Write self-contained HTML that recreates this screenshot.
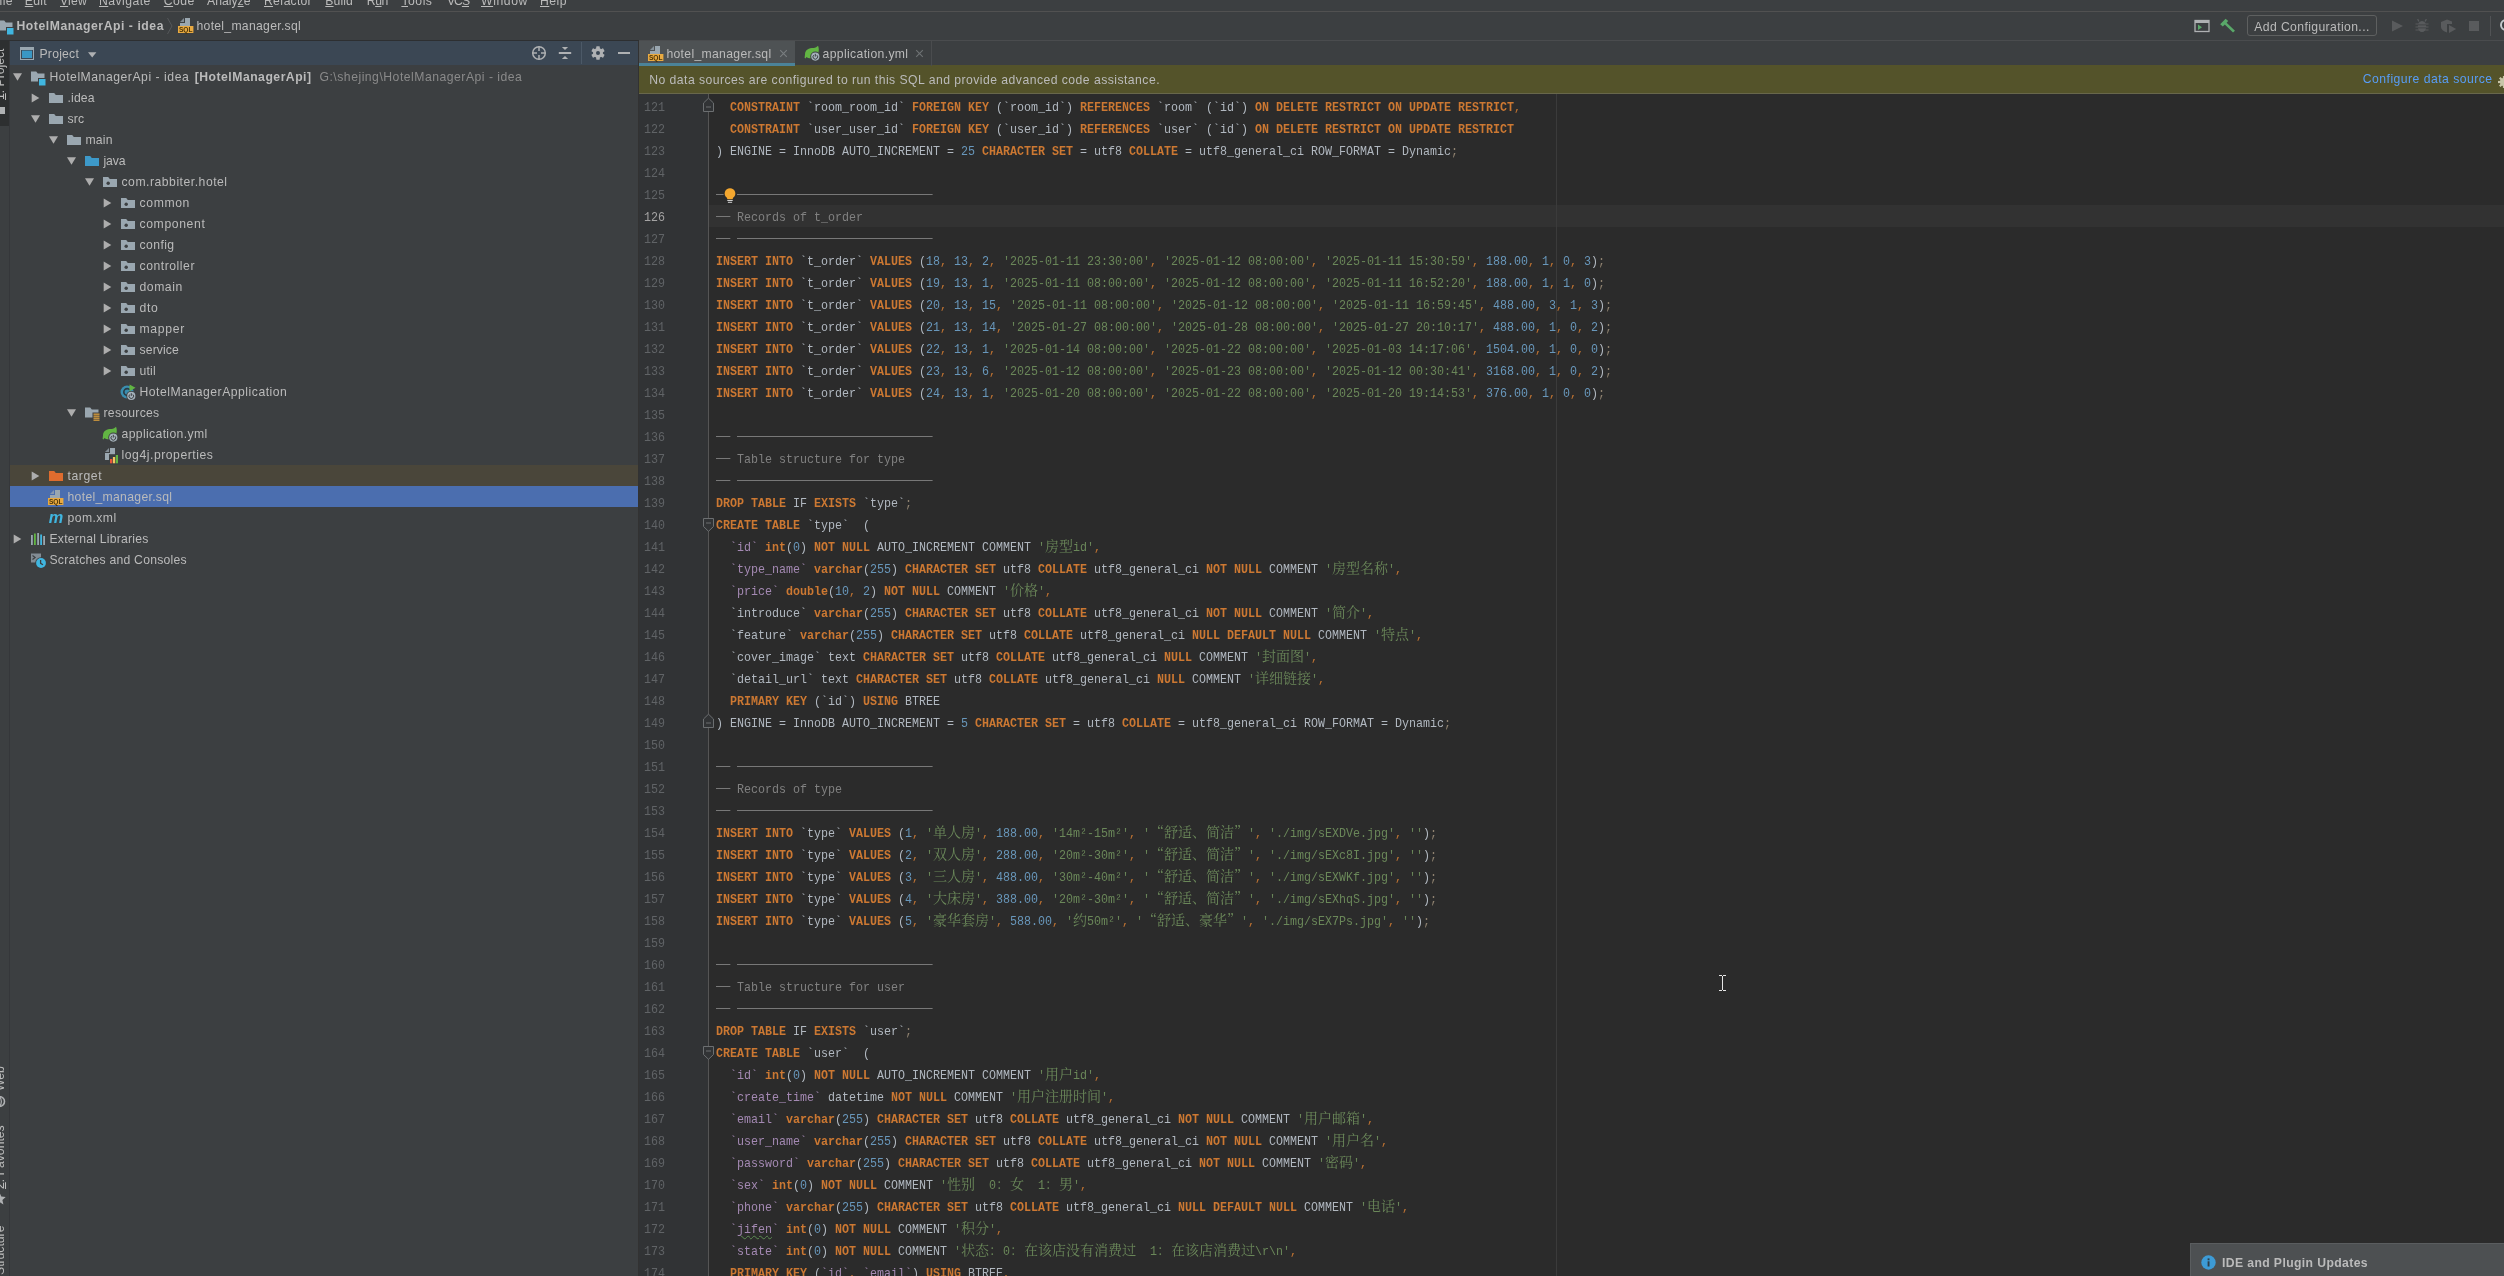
<!DOCTYPE html>
<html lang="zh"><head><meta charset="utf-8"><title>HotelManagerApi - idea - hotel_manager.sql</title>
<style>
html,body{margin:0;padding:0}
body{width:2504px;height:1276px;overflow:hidden;background:#3c3f41;position:relative;font-family:"Liberation Sans", "Noto Sans CJK SC", sans-serif;font-size:12.2px;color:#bbbbbb}
#root{position:absolute;left:0;top:0;width:2504px;height:1276px;will-change:transform}
.t{position:absolute;white-space:pre;line-height:normal}
.t u,.vt u{text-decoration:underline;text-decoration-thickness:1px;text-underline-offset:1.2px}
.vt{position:absolute;white-space:pre;transform-origin:0 0;transform:rotate(-90deg);line-height:14px;font-size:12.2px}
.bx{position:absolute}
.ln,.num{position:absolute;height:22px;line-height:22px;white-space:pre;font-size:0;margin-top:2.1px}
.ln{left:716px;color:#b1b8c0}
.num{left:643.8px;color:#606366}
.num.cur{color:#a4a3a3}
.L{display:inline-block;font-family:"Liberation Mono",monospace;font-size:13px;transform:scaleX(.8973);transform-origin:0 50%;white-space:pre;vertical-align:baseline}
.W{font-family:"Noto Serif CJK SC","Noto Sans CJK SC",serif;font-size:14px;line-height:0}
i{font-style:normal}
.k{color:#cc7832;font-weight:bold}
.o{color:#bd7232}
.sc{color:#8f8270}
.n{color:#6897bb}
.s{color:#6a8759}
.p{color:#a489b3}
.c,.cd{color:#808080}
.cd{color:transparent;position:relative}
.cd::after{content:'';position:absolute;left:0;top:9px;width:111.45%;height:1px;background:#787878}
.wv{text-decoration:underline wavy #5d8c53;text-decoration-thickness:1px;text-underline-offset:1.5px}
.w1{width:7px}.w2{width:14px}.w3{width:21px}.w4{width:28px}.w5{width:35px}.w6{width:42px}.w7{width:49px}.w8{width:56px}.w9{width:63px}.w10{width:70px}.w11{width:77px}.w12{width:84px}.w13{width:91px}.w14{width:98px}.w15{width:105px}.w16{width:112px}.w18{width:126px}.w19{width:133px}.w20{width:140px}.w21{width:147px}.w23{width:161px}.w25{width:175px}.w28{width:196px}.w35{width:245px}.w37{width:259px}.w38{width:266px}
</style></head><body><div id="root">

<div class="bx" style="left:0;top:11px;width:2504px;height:1px;background:#515151"></div>
<div class="bx" style="left:0;top:40px;width:639px;height:1px;background:#2d2f31"></div>
<div class="bx" style="left:639px;top:40px;width:1865px;height:1px;background:#4a4c4e"></div>
<div class="bx" style="left:9px;top:41px;width:1px;height:1235px;background:#35373a"></div>
<div class="bx" style="left:10px;top:41px;width:628px;height:24px;background:#3b4754"></div>
<div class="bx" style="left:638px;top:41px;width:1px;height:1235px;background:#323232"></div>
<div class="bx" style="left:639px;top:41px;width:156px;height:25px;background:#4e5254"></div>
<div class="bx" style="left:639px;top:65px;width:1865px;height:29px;background:#54532a"></div>
<div class="bx" style="left:639px;top:93px;width:1865px;height:1px;background:#68674c"></div>
<div class="bx" style="left:639px;top:63px;width:156px;height:3px;background:#4b8399"></div>
<div class="bx" style="left:639px;top:94px;width:1865px;height:1182px;background:#2b2b2b"></div>
<div class="bx" style="left:639px;top:94px;width:69px;height:1182px;background:#313335"></div>
<div class="bx" style="left:708px;top:94px;width:1px;height:1182px;background:#555555"></div>
<div class="bx" style="left:709px;top:205px;width:1795px;height:22px;background:#323232"></div>
<div class="bx" style="left:1556px;top:94px;width:1px;height:1182px;background:#3b3b3b"></div>


<div style="position:absolute;left:0;top:41px;width:9px;height:85px;background:#2d2f30"></div>
<div class="vt" style="left:-7px;top:100px"><u>1</u>: Project</div>
<div style="position:absolute;left:0;top:107px;width:5px;height:7px;background:#afb1b3"></div>
<div class="vt" style="left:-7px;top:1091px">Web</div>
<div class="vt" style="left:-7px;top:1189px"><u>2</u>: Favorites</div>
<div class="vt" style="left:-7px;top:1275px">Structure</div>
<svg style="position:absolute;left:-7px;top:1095px" width="13" height="13" viewBox="0 0 13 13"><circle cx="6.5" cy="6.5" r="5" fill="none" stroke="#afb1b3" stroke-width="1.6"/><path d="M6.5,1.5 C9,4 9,9 6.5,11.5" stroke="#afb1b3" stroke-width="1.2" fill="none"/></svg>
<svg style="position:absolute;left:-7px;top:1192px" width="13" height="13" viewBox="0 0 13 13"><path d="M6.5,0.5 L8.3,4.6 L12.7,5 L9.4,8 L10.4,12.4 L6.5,10.1 L2.6,12.4 L3.6,8 L0.3,5 L4.7,4.6 Z" fill="#afb1b3"/></svg>

<svg style="position:absolute;left:12px;top:72.1px;" width="11" height="10" viewBox="0 0 11 10"><path d="M1,1.2 H10 L5.5,8.8 Z" fill="#adadad"/></svg>
<svg style="position:absolute;left:30px;top:68.8px;" width="16" height="17" viewBox="0 0 16 17"><path d="M1,2.5 H6.2 L7.8,4.5 H14.5 V12.5 H1 Z" fill="#9aa7b0"/><rect x="8" y="9" width="8" height="8" fill="#3c3f41"/><rect x="9" y="10" width="6.5" height="6.5" fill="#40b6e0"/></svg>
<svg style="position:absolute;left:30px;top:92px;" width="11" height="12" viewBox="0 0 11 12"><path d="M1.7,1.5 L9.3,6 L1.7,10.5 Z" fill="#adadad"/></svg>
<svg style="position:absolute;left:48px;top:89.8px;" width="16" height="17" viewBox="0 0 16 17"><path d="M1,3 H6.2 L7.8,5 H15 V13 H1 Z" fill="#9aa7b0"/></svg>
<svg style="position:absolute;left:30px;top:114.1px;" width="11" height="10" viewBox="0 0 11 10"><path d="M1,1.2 H10 L5.5,8.8 Z" fill="#adadad"/></svg>
<svg style="position:absolute;left:48px;top:110.8px;" width="16" height="17" viewBox="0 0 16 17"><path d="M1,3 H6.2 L7.8,5 H15 V13 H1 Z" fill="#9aa7b0"/></svg>
<svg style="position:absolute;left:48px;top:135.1px;" width="11" height="10" viewBox="0 0 11 10"><path d="M1,1.2 H10 L5.5,8.8 Z" fill="#adadad"/></svg>
<svg style="position:absolute;left:66px;top:131.8px;" width="16" height="17" viewBox="0 0 16 17"><path d="M1,3 H6.2 L7.8,5 H15 V13 H1 Z" fill="#9aa7b0"/></svg>
<svg style="position:absolute;left:66px;top:156.1px;" width="11" height="10" viewBox="0 0 11 10"><path d="M1,1.2 H10 L5.5,8.8 Z" fill="#adadad"/></svg>
<svg style="position:absolute;left:84px;top:152.8px;" width="16" height="17" viewBox="0 0 16 17"><path d="M1,3 H6.2 L7.8,5 H15 V13 H1 Z" fill="#3d99c9"/></svg>
<svg style="position:absolute;left:84px;top:177.1px;" width="11" height="10" viewBox="0 0 11 10"><path d="M1,1.2 H10 L5.5,8.8 Z" fill="#adadad"/></svg>
<svg style="position:absolute;left:102px;top:173.8px;" width="16" height="17" viewBox="0 0 16 17"><path d="M1,3 H6.2 L7.8,5 H15 V13 H1 Z" fill="#9aa7b0"/><circle cx="6.2" cy="9.2" r="1.7" fill="#3c3f41"/></svg>
<svg style="position:absolute;left:102px;top:197px;" width="11" height="12" viewBox="0 0 11 12"><path d="M1.7,1.5 L9.3,6 L1.7,10.5 Z" fill="#adadad"/></svg>
<svg style="position:absolute;left:120px;top:194.8px;" width="16" height="17" viewBox="0 0 16 17"><path d="M1,3 H6.2 L7.8,5 H15 V13 H1 Z" fill="#9aa7b0"/><circle cx="6.2" cy="9.2" r="1.7" fill="#3c3f41"/></svg>
<svg style="position:absolute;left:102px;top:218px;" width="11" height="12" viewBox="0 0 11 12"><path d="M1.7,1.5 L9.3,6 L1.7,10.5 Z" fill="#adadad"/></svg>
<svg style="position:absolute;left:120px;top:215.8px;" width="16" height="17" viewBox="0 0 16 17"><path d="M1,3 H6.2 L7.8,5 H15 V13 H1 Z" fill="#9aa7b0"/><circle cx="6.2" cy="9.2" r="1.7" fill="#3c3f41"/></svg>
<svg style="position:absolute;left:102px;top:239px;" width="11" height="12" viewBox="0 0 11 12"><path d="M1.7,1.5 L9.3,6 L1.7,10.5 Z" fill="#adadad"/></svg>
<svg style="position:absolute;left:120px;top:236.8px;" width="16" height="17" viewBox="0 0 16 17"><path d="M1,3 H6.2 L7.8,5 H15 V13 H1 Z" fill="#9aa7b0"/><circle cx="6.2" cy="9.2" r="1.7" fill="#3c3f41"/></svg>
<svg style="position:absolute;left:102px;top:260px;" width="11" height="12" viewBox="0 0 11 12"><path d="M1.7,1.5 L9.3,6 L1.7,10.5 Z" fill="#adadad"/></svg>
<svg style="position:absolute;left:120px;top:257.8px;" width="16" height="17" viewBox="0 0 16 17"><path d="M1,3 H6.2 L7.8,5 H15 V13 H1 Z" fill="#9aa7b0"/><circle cx="6.2" cy="9.2" r="1.7" fill="#3c3f41"/></svg>
<svg style="position:absolute;left:102px;top:281px;" width="11" height="12" viewBox="0 0 11 12"><path d="M1.7,1.5 L9.3,6 L1.7,10.5 Z" fill="#adadad"/></svg>
<svg style="position:absolute;left:120px;top:278.8px;" width="16" height="17" viewBox="0 0 16 17"><path d="M1,3 H6.2 L7.8,5 H15 V13 H1 Z" fill="#9aa7b0"/><circle cx="6.2" cy="9.2" r="1.7" fill="#3c3f41"/></svg>
<svg style="position:absolute;left:102px;top:302px;" width="11" height="12" viewBox="0 0 11 12"><path d="M1.7,1.5 L9.3,6 L1.7,10.5 Z" fill="#adadad"/></svg>
<svg style="position:absolute;left:120px;top:299.8px;" width="16" height="17" viewBox="0 0 16 17"><path d="M1,3 H6.2 L7.8,5 H15 V13 H1 Z" fill="#9aa7b0"/><circle cx="6.2" cy="9.2" r="1.7" fill="#3c3f41"/></svg>
<svg style="position:absolute;left:102px;top:323px;" width="11" height="12" viewBox="0 0 11 12"><path d="M1.7,1.5 L9.3,6 L1.7,10.5 Z" fill="#adadad"/></svg>
<svg style="position:absolute;left:120px;top:320.8px;" width="16" height="17" viewBox="0 0 16 17"><path d="M1,3 H6.2 L7.8,5 H15 V13 H1 Z" fill="#9aa7b0"/><circle cx="6.2" cy="9.2" r="1.7" fill="#3c3f41"/></svg>
<svg style="position:absolute;left:102px;top:344px;" width="11" height="12" viewBox="0 0 11 12"><path d="M1.7,1.5 L9.3,6 L1.7,10.5 Z" fill="#adadad"/></svg>
<svg style="position:absolute;left:120px;top:341.8px;" width="16" height="17" viewBox="0 0 16 17"><path d="M1,3 H6.2 L7.8,5 H15 V13 H1 Z" fill="#9aa7b0"/><circle cx="6.2" cy="9.2" r="1.7" fill="#3c3f41"/></svg>
<svg style="position:absolute;left:102px;top:365px;" width="11" height="12" viewBox="0 0 11 12"><path d="M1.7,1.5 L9.3,6 L1.7,10.5 Z" fill="#adadad"/></svg>
<svg style="position:absolute;left:120px;top:362.8px;" width="16" height="17" viewBox="0 0 16 17"><path d="M1,3 H6.2 L7.8,5 H15 V13 H1 Z" fill="#9aa7b0"/><circle cx="6.2" cy="9.2" r="1.7" fill="#3c3f41"/></svg>
<svg style="position:absolute;left:120px;top:383.8px;" width="16" height="17" viewBox="0 0 16 17"><circle cx="7" cy="8" r="6.5" fill="#3a8eb0"/><path d="M9.8,10.2 A3.4,3.4 0 1 1 9.8,5.8" stroke="#2b3b44" stroke-width="1.6" fill="none"/><path d="M9.5,0.5 L15.5,3.8 L9.5,7.2 Z" fill="#62b543"/><circle cx="11.3" cy="11.9" r="5" fill="#3c3f41"/><circle cx="11.3" cy="11.9" r="4.1" fill="#a4b1ba"/><path d="M9.700000000000001,10.5 a2.3,2.3 0 1 0 3.2,0" stroke="#3c3f41" stroke-width="1" fill="none"/><path d="M11.3,9.2 v2.7" stroke="#3c3f41" stroke-width="1"/></svg>
<svg style="position:absolute;left:66px;top:408.1px;" width="11" height="10" viewBox="0 0 11 10"><path d="M1,1.2 H10 L5.5,8.8 Z" fill="#adadad"/></svg>
<svg style="position:absolute;left:84px;top:404.8px;" width="16" height="17" viewBox="0 0 16 17"><path d="M1,2.5 H6.2 L7.8,4.5 H14.5 V12.5 H1 Z" fill="#9aa7b0"/><rect x="8.5" y="7.5" width="8" height="9" fill="#3c3f41"/><rect x="9.5" y="8.6" width="6" height="1.1" fill="#f4af3d"/><rect x="9.5" y="10.6" width="6" height="1.1" fill="#f4af3d"/><rect x="9.5" y="12.6" width="6" height="1.1" fill="#f4af3d"/><rect x="9.5" y="14.6" width="6" height="1.1" fill="#f4af3d"/></svg>
<svg style="position:absolute;left:102px;top:425.8px;" width="16" height="17" viewBox="0 0 16 17"><path d="M1,9.5 C1,4.5 5,3 9.5,3 C11.5,3 13,2 14,0.8 C15.5,4 15,9 12,11.5 C9,14 4,13.5 2.5,12 L1.5,13.5 L0.6,12.8 Z" fill="#62b543"/><circle cx="11.3" cy="11.6" r="5" fill="#3c3f41"/><circle cx="11.3" cy="11.6" r="4.1" fill="#a4b1ba"/><path d="M9.700000000000001,10.2 a2.3,2.3 0 1 0 3.2,0" stroke="#3c3f41" stroke-width="1" fill="none"/><path d="M11.3,8.899999999999999 v2.7" stroke="#3c3f41" stroke-width="1"/></svg>
<svg style="position:absolute;left:102px;top:446.8px;" width="16" height="17" viewBox="0 0 16 17"><path d="M7,1 L3,5 H7 Z" fill="#9aa7b0" opacity=".75"/><path d="M8,1 V6 H3 V13 H13 V1 Z" fill="#9aa7b0"/><rect x="7" y="7.2" width="9.5" height="9.5" fill="#3c3f41"/><rect x="8" y="12" width="2.3" height="4.3" fill="#e8553a"/><rect x="10.9" y="10" width="2.3" height="6.3" fill="#f4c45f"/><rect x="13.8" y="8" width="2.3" height="8.3" fill="#62b543"/></svg>
<div style="position:absolute;left:10px;top:465px;width:628px;height:21px;background:#4a463a"></div>
<svg style="position:absolute;left:30px;top:470px;" width="11" height="12" viewBox="0 0 11 12"><path d="M1.7,1.5 L9.3,6 L1.7,10.5 Z" fill="#adadad"/></svg>
<svg style="position:absolute;left:48px;top:467.8px;" width="16" height="17" viewBox="0 0 16 17"><path d="M1,3 H6.2 L7.8,5 H15 V13 H1 Z" fill="#df6c2e"/></svg>
<div style="position:absolute;left:10px;top:486px;width:628px;height:21px;background:#4b6eaf"></div>
<svg style="position:absolute;left:48px;top:488.8px;" width="16" height="17" viewBox="0 0 16 17"><path d="M6,1 L2,5 H6 Z" fill="#9aa7b0" opacity=".75"/><path d="M7,1 V6 H2 V9.5 H12 V1 Z" fill="#9aa7b0"/><rect x="0" y="9" width="15.4" height="7" fill="#e9aa41"/><text x="7.7" y="15" font-family="Liberation Sans, sans-serif" font-weight="bold" font-size="6.6" text-anchor="middle" fill="#4a3408" textLength="13.6" lengthAdjust="spacingAndGlyphs">SQL</text></svg>
<svg style="position:absolute;left:48px;top:509.8px;" width="16" height="17" viewBox="0 0 16 17"><text x="8" y="13.4" font-family="Liberation Sans, sans-serif" font-style="italic" font-weight="bold" font-size="17" text-anchor="middle" fill="#40b6e0" textLength="14.5" lengthAdjust="spacingAndGlyphs">m</text></svg>
<svg style="position:absolute;left:12px;top:533px;" width="11" height="12" viewBox="0 0 11 12"><path d="M1.7,1.5 L9.3,6 L1.7,10.5 Z" fill="#adadad"/></svg>
<svg style="position:absolute;left:30px;top:530.8px;" width="16" height="17" viewBox="0 0 16 17"><rect x="1" y="4" width="1.8" height="10" fill="#9aa7b0"/><rect x="4" y="2.5" width="1.8" height="11.5" fill="#62b543"/><rect x="7.2" y="2" width="1.8" height="12" fill="#9aa7b0"/><rect x="10.2" y="3.5" width="1.8" height="10.5" fill="#40b6e0"/><rect x="13.2" y="5" width="1.8" height="9" fill="#9aa7b0"/></svg>
<svg style="position:absolute;left:30px;top:551.8px;" width="16" height="17" viewBox="0 0 16 17"><rect x="1" y="1.5" width="10" height="9" fill="#9aa7b0" opacity=".75"/><path d="M2.5,3.5 l2.6,2 l-2.6,2" stroke="#3c3f41" stroke-width="1.2" fill="none"/><circle cx="11" cy="11" r="5.8" fill="#3c3f41"/><circle cx="11" cy="11" r="4.9" fill="#40b6e0"/><path d="M10.6,8 v3.4 l2.4,1.4" stroke="#3c3f41" stroke-width="1.3" fill="none"/></svg>
<svg style="position:absolute;left:-2px;top:18px;" width="16" height="17" viewBox="0 0 16 17"><path d="M1,2.5 H6.2 L7.8,4.5 H14.5 V12.5 H1 Z" fill="#9aa7b0"/><rect x="8" y="9" width="8" height="8" fill="#3c3f41"/><rect x="9" y="10" width="6.5" height="6.5" fill="#40b6e0"/></svg>
<svg style="position:absolute;left:166px;top:17px;" width="8" height="18" viewBox="0 0 8 18"><path d="M1.5,1 L6,9 L1.5,17" stroke="#55585a" stroke-width="1" fill="none"/></svg>
<svg style="position:absolute;left:178px;top:17px;" width="16" height="17" viewBox="0 0 16 17"><path d="M6,1 L2,5 H6 Z" fill="#9aa7b0" opacity=".75"/><path d="M7,1 V6 H2 V9.5 H12 V1 Z" fill="#9aa7b0"/><rect x="0" y="9" width="15.4" height="7" fill="#e9aa41"/><text x="7.7" y="15" font-family="Liberation Sans, sans-serif" font-weight="bold" font-size="6.6" text-anchor="middle" fill="#4a3408" textLength="13.6" lengthAdjust="spacingAndGlyphs">SQL</text></svg>
<svg style="position:absolute;left:2194px;top:19px;" width="16" height="14" viewBox="0 0 16 14"><rect x="1" y="1.5" width="14" height="11" fill="none" stroke="#afb1b3" stroke-width="1.3"/><rect x="1" y="1.5" width="14" height="2.5" fill="#afb1b3"/><path d="M4,5.5 L8,8.2 L4,11 Z" fill="#59a869"/></svg>
<svg style="position:absolute;left:2219px;top:18px;" width="17" height="15" viewBox="0 0 17 15"><path d="M1.2,6.2 L6.6,0.8 L9.2,3 L7.6,4.7 L16,12.8 L14,14.6 L5.8,6.4 L3.8,8.4 Z" fill="#59a869"/></svg>
<div style="position:absolute;left:2247px;top:15px;width:130px;height:21px;border:1px solid #5e6060;border-radius:3px;box-sizing:border-box"></div>
<svg style="position:absolute;left:2391px;top:20px;" width="13" height="12" viewBox="0 0 13 12"><path d="M1,0.5 L12,6 L1,11.5 Z" fill="#595b5d"/></svg>
<svg style="position:absolute;left:2415px;top:18px;" width="14" height="15" viewBox="0 0 14 15"><path d="M4,3.5 L2.6,1.2 M10,3.5 L11.4,1.2" stroke="#595b5d" stroke-width="1.3"/><ellipse cx="7" cy="8.5" rx="4.2" ry="5.6" fill="#595b5d"/><path d="M0.5,6 H13.5 M0.5,9 H13.5 M0.5,12 H13.5" stroke="#595b5d" stroke-width="1.2"/><path d="M3,6.9 H11 M3,9.9 H11" stroke="#3c3f41" stroke-width=".8"/></svg>
<svg style="position:absolute;left:2440px;top:19px;" width="17" height="15" viewBox="0 0 17 15"><path d="M7,0.5 L1,3 V8 C1,10.5 3.5,12.5 7,13.5 V0.5 Z" fill="#595b5d"/><path d="M7,0.5 L12,2.6 V5 H7 Z" fill="#595b5d"/><path d="M9,6 L16.2,10 L9,14 Z" fill="#595b5d"/></svg>
<div style="position:absolute;left:2469px;top:21px;width:10px;height:10px;background:#595b5d"></div>
<div style="position:absolute;left:2490px;top:16px;width:1px;height:20px;background:#515355"></div>
<svg style="position:absolute;left:2499px;top:18px;" width="12" height="14" viewBox="0 0 12 14"><circle cx="7" cy="7" r="5" fill="none" stroke="#c3c9cc" stroke-width="2"/></svg>
<svg style="position:absolute;left:20px;top:47px;" width="14" height="13" viewBox="0 0 14 13"><rect x="0.5" y="0.5" width="13" height="12" fill="none" stroke="#9aa7b0" stroke-width="1"/><rect x="0" y="0" width="14" height="3" fill="#9aa7b0"/><rect x="2" y="3.6" width="10" height="7.4" fill="#3a97c4"/></svg>
<svg style="position:absolute;left:87px;top:51px;" width="11" height="8" viewBox="0 0 11 8"><path d="M1,1.2 H9.4 L5.2,6.4 Z" fill="#afb1b3"/></svg>
<svg style="position:absolute;left:531px;top:45px;" width="16" height="16" viewBox="0 0 16 16"><circle cx="8" cy="8" r="6.3" fill="none" stroke="#afb1b3" stroke-width="1.5"/><path d="M8,1.5 V6 M8,10 V14.5 M1.5,8 H6 M10,8 H14.5" stroke="#afb1b3" stroke-width="1.5"/></svg>
<svg style="position:absolute;left:558px;top:45px;" width="14" height="16" viewBox="0 0 14 16"><path d="M3.9,1.9 H10.1 L7,4.9 Z M3.9,14.1 H10.1 L7,11.1 Z" fill="#afb1b3"/><rect x="0.8" y="7" width="12.4" height="2" fill="#afb1b3"/></svg>
<div style="position:absolute;left:581px;top:42px;width:1px;height:22px;background:#4c5967"></div>
<svg style="position:absolute;left:590px;top:45px;" width="16" height="16" viewBox="0 0 16 16"><rect x="6.2" y="1.3" width="3.6" height="13.4" rx=".6" fill="#afb1b3" transform="rotate(0 8 8)"/><rect x="6.2" y="1.3" width="3.6" height="13.4" rx=".6" fill="#afb1b3" transform="rotate(60 8 8)"/><rect x="6.2" y="1.3" width="3.6" height="13.4" rx=".6" fill="#afb1b3" transform="rotate(120 8 8)"/><circle cx="8" cy="8" r="5" fill="#afb1b3"/><circle cx="8" cy="8" r="2" fill="#3b4754"/></svg>
<div style="position:absolute;left:618px;top:52px;width:12px;height:2px;background:#afb1b3"></div>
<svg style="position:absolute;left:648px;top:45px;" width="16" height="17" viewBox="0 0 16 17"><path d="M6,1 L2,5 H6 Z" fill="#9aa7b0" opacity=".75"/><path d="M7,1 V6 H2 V9.5 H12 V1 Z" fill="#9aa7b0"/><rect x="0" y="9" width="15.4" height="7" fill="#e9aa41"/><text x="7.7" y="15" font-family="Liberation Sans, sans-serif" font-weight="bold" font-size="6.6" text-anchor="middle" fill="#4a3408" textLength="13.6" lengthAdjust="spacingAndGlyphs">SQL</text></svg>
<svg style="position:absolute;left:804px;top:45px;" width="16" height="17" viewBox="0 0 16 17"><path d="M1,9.5 C1,4.5 5,3 9.5,3 C11.5,3 13,2 14,0.8 C15.5,4 15,9 12,11.5 C9,14 4,13.5 2.5,12 L1.5,13.5 L0.6,12.8 Z" fill="#62b543"/><circle cx="11.3" cy="11.6" r="5" fill="#3c3f41"/><circle cx="11.3" cy="11.6" r="4.1" fill="#a4b1ba"/><path d="M9.700000000000001,10.2 a2.3,2.3 0 1 0 3.2,0" stroke="#3c3f41" stroke-width="1" fill="none"/><path d="M11.3,8.899999999999999 v2.7" stroke="#3c3f41" stroke-width="1"/></svg>
<svg style="position:absolute;left:778.5px;top:49px;" width="9" height="9" viewBox="0 0 9 9"><path d="M1.2,1.2 L7.8,7.8 M7.8,1.2 L1.2,7.8" stroke="#7a7e80" stroke-width="1.1"/></svg>
<svg style="position:absolute;left:915px;top:49px;" width="9" height="9" viewBox="0 0 9 9"><path d="M1.2,1.2 L7.8,7.8 M7.8,1.2 L1.2,7.8" stroke="#6e7274" stroke-width="1.1"/></svg>
<div style="position:absolute;left:931px;top:41px;width:1px;height:25px;background:#4a4c4e"></div>
<svg style="position:absolute;left:2498px;top:76px;" width="12" height="12" viewBox="0 0 12 12"><rect x="4.9" y="0" width="2.2" height="12" fill="#c8c5a8" transform="rotate(0 6 6)"/><rect x="4.9" y="0" width="2.2" height="12" fill="#c8c5a8" transform="rotate(45 6 6)"/><rect x="4.9" y="0" width="2.2" height="12" fill="#c8c5a8" transform="rotate(90 6 6)"/><rect x="4.9" y="0" width="2.2" height="12" fill="#c8c5a8" transform="rotate(135 6 6)"/><circle cx="6" cy="6" r="4" fill="#c8c5a8"/></svg>
<svg style="position:absolute;left:702px;top:97px;" width="13" height="16" viewBox="0 0 13 16"><path d="M1.5,14.5 V6 L6.5,1.2 L11.5,6 V14.5 Z" fill="#313335" stroke="#6c6f71" stroke-width="1"/><path d="M4,10 H9" stroke="#6c6f71" stroke-width="1"/></svg>
<svg style="position:absolute;left:702px;top:517px;" width="13" height="16" viewBox="0 0 13 16"><path d="M1.5,1.5 H11.5 V9.5 L6.5,14.3 L1.5,9.5 Z" fill="#313335" stroke="#6c6f71" stroke-width="1"/><path d="M4,6 H9" stroke="#6c6f71" stroke-width="1"/></svg>
<svg style="position:absolute;left:702px;top:713px;" width="13" height="16" viewBox="0 0 13 16"><path d="M1.5,14.5 V6 L6.5,1.2 L11.5,6 V14.5 Z" fill="#313335" stroke="#6c6f71" stroke-width="1"/><path d="M4,10 H9" stroke="#6c6f71" stroke-width="1"/></svg>
<svg style="position:absolute;left:702px;top:1045px;" width="13" height="16" viewBox="0 0 13 16"><path d="M1.5,1.5 H11.5 V9.5 L6.5,14.3 L1.5,9.5 Z" fill="#313335" stroke="#6c6f71" stroke-width="1"/><path d="M4,6 H9" stroke="#6c6f71" stroke-width="1"/></svg>
<svg style="position:absolute;left:722px;top:186px;z-index:3;" width="16" height="18" viewBox="0 0 16 18"><circle cx="8" cy="7.6" r="6.6" fill="#2b2b2b"/><path d="M8,2.2 a5.3,5.3 0 0 1 3.1,9.6 L10.6,13.2 H5.4 L4.9,11.8 A5.3,5.3 0 0 1 8,2.2 Z" fill="#f4a72f"/><rect x="5.3" y="14" width="5.4" height="1" fill="#d0d0d0"/><rect x="5.9" y="15.8" width="4.2" height="1" fill="#d0d0d0"/></svg>
<div style="position:absolute;left:2190px;top:1243px;width:320px;height:40px;background:#4d5052;border:1px solid #5a5d5f;box-sizing:border-box"></div>
<svg style="position:absolute;left:2200.5px;top:1254.5px;" width="15" height="15" viewBox="0 0 15 15"><circle cx="7.5" cy="7.5" r="7.2" fill="#3d9bd6"/><rect x="6.6" y="6.3" width="1.9" height="5.2" fill="#2e3c46"/><rect x="6.6" y="3.4" width="1.9" height="1.9" fill="#2e3c46"/></svg>
<svg style="position:absolute;left:1719px;top:975px;" width="8" height="16" viewBox="0 0 8 16"><g fill="#e6e6e6" shape-rendering="crispEdges"><rect x="0" y="0" width="3" height="1"/><rect x="4" y="0" width="3" height="1"/><rect x="3" y="1" width="1" height="14"/><rect x="0" y="15" width="3" height="1"/><rect x="4" y="15" width="3" height="1"/></g></svg>
<div class="t" style="left:-0.5px;top:-6.0px;letter-spacing:0.432px;">ile</div>
<div class="t" style="left:24.8px;top:-6.0px;letter-spacing:0.296px;"><u>E</u>dit</div>
<div class="t" style="left:60.0px;top:-6.0px;letter-spacing:0.199px;"><u>V</u>iew</div>
<div class="t" style="left:99.0px;top:-6.0px;letter-spacing:0.449px;"><u>N</u>avigate</div>
<div class="t" style="left:163.8px;top:-6.0px;letter-spacing:0.465px;"><u>C</u>ode</div>
<div class="t" style="left:207.0px;top:-6.0px;letter-spacing:0.020px;">Analy<u>z</u>e</div>
<div class="t" style="left:264.0px;top:-6.0px;letter-spacing:0.217px;"><u>R</u>efactor</div>
<div class="t" style="left:325.3px;top:-6.0px;letter-spacing:0.118px;"><u>B</u>uild</div>
<div class="t" style="left:366.7px;top:-6.0px;letter-spacing:-0.353px;">R<u>u</u>n</div>
<div class="t" style="left:401.4px;top:-6.0px;letter-spacing:0.529px;"><u>T</u>ools</div>
<div class="t" style="left:447.0px;top:-6.0px;letter-spacing:-1.021px;">VC<u>S</u></div>
<div class="t" style="left:481.0px;top:-6.0px;letter-spacing:0.607px;"><u>W</u>indow</div>
<div class="t" style="left:540.0px;top:-6.0px;letter-spacing:0.480px;"><u>H</u>elp</div>
<div class="t" style="left:16.5px;top:19.0px;letter-spacing:0.548px;font-weight:bold;">HotelManagerApi - idea</div>
<div class="t" style="left:196.5px;top:19.0px;letter-spacing:0.288px;">hotel_manager.sql</div>
<div class="t" style="left:2254.3px;top:19.7px;letter-spacing:0.383px;">Add Configuration...</div>
<div class="t" style="left:39.5px;top:46.5px;letter-spacing:0.223px;">Project</div>
<div class="t" style="left:666.4px;top:46.5px;letter-spacing:0.323px;">hotel_manager.sql</div>
<div class="t" style="left:822.6px;top:46.5px;letter-spacing:0.345px;">application.yml</div>
<div class="t" style="left:649.2px;top:73.0px;letter-spacing:0.465px;">No data sources are configured to run this SQL and provide advanced code assistance.</div>
<div class="t" style="left:2362.8px;top:72.0px;letter-spacing:0.470px;color:#589df6;">Configure data source</div>
<div class="t" style="left:2222.0px;top:1255.5px;letter-spacing:0.388px;font-weight:bold;">IDE and Plugin Updates</div>
<div class="t" style="left:67.5px;top:91.0px;letter-spacing:0.153px;">.idea</div>
<div class="t" style="left:67.5px;top:112.0px;letter-spacing:0.183px;">src</div>
<div class="t" style="left:85.5px;top:133.0px;letter-spacing:0.170px;">main</div>
<div class="t" style="left:103.5px;top:154.0px;letter-spacing:-0.115px;">java</div>
<div class="t" style="left:121.5px;top:175.0px;letter-spacing:0.512px;">com.rabbiter.hotel</div>
<div class="t" style="left:139.5px;top:196.0px;letter-spacing:0.628px;">common</div>
<div class="t" style="left:139.5px;top:217.0px;letter-spacing:0.621px;">component</div>
<div class="t" style="left:139.5px;top:238.0px;letter-spacing:0.411px;">config</div>
<div class="t" style="left:139.5px;top:259.0px;letter-spacing:0.537px;">controller</div>
<div class="t" style="left:139.5px;top:280.0px;letter-spacing:0.553px;">domain</div>
<div class="t" style="left:139.5px;top:301.0px;letter-spacing:0.616px;">dto</div>
<div class="t" style="left:139.5px;top:322.0px;letter-spacing:0.695px;">mapper</div>
<div class="t" style="left:139.5px;top:343.0px;letter-spacing:0.127px;">service</div>
<div class="t" style="left:139.5px;top:364.0px;letter-spacing:0.177px;">util</div>
<div class="t" style="left:139.5px;top:385.0px;letter-spacing:0.509px;">HotelManagerApplication</div>
<div class="t" style="left:103.5px;top:406.0px;letter-spacing:0.276px;">resources</div>
<div class="t" style="left:121.5px;top:427.0px;letter-spacing:0.358px;">application.yml</div>
<div class="t" style="left:121.5px;top:448.0px;letter-spacing:0.541px;">log4j.properties</div>
<div class="t" style="left:67.5px;top:469.0px;letter-spacing:0.588px;">target</div>
<div class="t" style="left:67.5px;top:490.0px;letter-spacing:0.311px;">hotel_manager.sql</div>
<div class="t" style="left:67.5px;top:511.0px;letter-spacing:0.434px;">pom.xml</div>
<div class="t" style="left:49.5px;top:532.0px;letter-spacing:0.236px;">External Libraries</div>
<div class="t" style="left:49.5px;top:553.0px;letter-spacing:0.236px;">Scratches and Consoles</div>
<div class="t" style="left:49.5px;top:70.0px;letter-spacing:0.534px;">HotelManagerApi - idea</div>
<div class="t" style="left:194.7px;top:70.0px;letter-spacing:0.503px;font-weight:bold;">[HotelManagerApi]</div>
<div class="t" style="left:319.5px;top:70.0px;letter-spacing:0.503px;color:#8a8a8a;">G:\shejing\HotelManagerApi - idea</div>
<div class="num" style="top:95px"><i class="L w3">121</i></div>
<div class="ln" style="top:95px"><i class="L w2">  </i><i class="L k w11">CONSTRAINT </i><i class="L w15">`room_room_id` </i><i class="L k w12">FOREIGN KEY </i><i class="L w12">(`room_id`) </i><i class="L k w11">REFERENCES </i><i class="L w14">`room` (`id`) </i><i class="L k w37">ON DELETE RESTRICT ON UPDATE RESTRICT</i><i class="L o w1">,</i></div>
<div class="num" style="top:117px"><i class="L w3">122</i></div>
<div class="ln" style="top:117px"><i class="L w2">  </i><i class="L k w11">CONSTRAINT </i><i class="L w15">`user_user_id` </i><i class="L k w12">FOREIGN KEY </i><i class="L w12">(`user_id`) </i><i class="L k w11">REFERENCES </i><i class="L w14">`user` (`id`) </i><i class="L k w37">ON DELETE RESTRICT ON UPDATE RESTRICT</i></div>
<div class="num" style="top:139px"><i class="L w3">123</i></div>
<div class="ln" style="top:139px"><i class="L w35">) ENGINE = InnoDB AUTO_INCREMENT = </i><i class="L n w3">25 </i><i class="L k w14">CHARACTER SET </i><i class="L w7">= utf8 </i><i class="L k w8">COLLATE </i><i class="L w38">= utf8_general_ci ROW_FORMAT = Dynamic</i><i class="L sc w1">;</i></div>
<div class="num" style="top:161px"><i class="L w3">124</i></div>
<div class="num" style="top:183px"><i class="L w3">125</i></div>
<div class="ln" style="top:183px"><i class="L cd w2">--</i><i class="L c w1"> </i><i class="L cd w28">----------------------------</i></div>
<div class="num cur" style="top:205px"><i class="L w3">126</i></div>
<div class="ln" style="top:205px"><i class="L cd w2">--</i><i class="L c w19"> Records of t_order</i></div>
<div class="num" style="top:227px"><i class="L w3">127</i></div>
<div class="ln" style="top:227px"><i class="L cd w2">--</i><i class="L c w1"> </i><i class="L cd w28">----------------------------</i></div>
<div class="num" style="top:249px"><i class="L w3">128</i></div>
<div class="ln" style="top:249px"><i class="L k w12">INSERT INTO </i><i class="L w10">`t_order` </i><i class="L k w7">VALUES </i><i class="L w1">(</i><i class="L n w2">18</i><i class="L o w2">, </i><i class="L n w2">13</i><i class="L o w2">, </i><i class="L n w1">2</i><i class="L o w2">, </i><i class="L s w21">'2025-01-11 23:30:00'</i><i class="L o w2">, </i><i class="L s w21">'2025-01-12 08:00:00'</i><i class="L o w2">, </i><i class="L s w21">'2025-01-11 15:30:59'</i><i class="L o w2">, </i><i class="L n w6">188.00</i><i class="L o w2">, </i><i class="L n w1">1</i><i class="L o w2">, </i><i class="L n w1">0</i><i class="L o w2">, </i><i class="L n w1">3</i><i class="L w1">)</i><i class="L sc w1">;</i></div>
<div class="num" style="top:271px"><i class="L w3">129</i></div>
<div class="ln" style="top:271px"><i class="L k w12">INSERT INTO </i><i class="L w10">`t_order` </i><i class="L k w7">VALUES </i><i class="L w1">(</i><i class="L n w2">19</i><i class="L o w2">, </i><i class="L n w2">13</i><i class="L o w2">, </i><i class="L n w1">1</i><i class="L o w2">, </i><i class="L s w21">'2025-01-11 08:00:00'</i><i class="L o w2">, </i><i class="L s w21">'2025-01-12 08:00:00'</i><i class="L o w2">, </i><i class="L s w21">'2025-01-11 16:52:20'</i><i class="L o w2">, </i><i class="L n w6">188.00</i><i class="L o w2">, </i><i class="L n w1">1</i><i class="L o w2">, </i><i class="L n w1">1</i><i class="L o w2">, </i><i class="L n w1">0</i><i class="L w1">)</i><i class="L sc w1">;</i></div>
<div class="num" style="top:293px"><i class="L w3">130</i></div>
<div class="ln" style="top:293px"><i class="L k w12">INSERT INTO </i><i class="L w10">`t_order` </i><i class="L k w7">VALUES </i><i class="L w1">(</i><i class="L n w2">20</i><i class="L o w2">, </i><i class="L n w2">13</i><i class="L o w2">, </i><i class="L n w2">15</i><i class="L o w2">, </i><i class="L s w21">'2025-01-11 08:00:00'</i><i class="L o w2">, </i><i class="L s w21">'2025-01-12 08:00:00'</i><i class="L o w2">, </i><i class="L s w21">'2025-01-11 16:59:45'</i><i class="L o w2">, </i><i class="L n w6">488.00</i><i class="L o w2">, </i><i class="L n w1">3</i><i class="L o w2">, </i><i class="L n w1">1</i><i class="L o w2">, </i><i class="L n w1">3</i><i class="L w1">)</i><i class="L sc w1">;</i></div>
<div class="num" style="top:315px"><i class="L w3">131</i></div>
<div class="ln" style="top:315px"><i class="L k w12">INSERT INTO </i><i class="L w10">`t_order` </i><i class="L k w7">VALUES </i><i class="L w1">(</i><i class="L n w2">21</i><i class="L o w2">, </i><i class="L n w2">13</i><i class="L o w2">, </i><i class="L n w2">14</i><i class="L o w2">, </i><i class="L s w21">'2025-01-27 08:00:00'</i><i class="L o w2">, </i><i class="L s w21">'2025-01-28 08:00:00'</i><i class="L o w2">, </i><i class="L s w21">'2025-01-27 20:10:17'</i><i class="L o w2">, </i><i class="L n w6">488.00</i><i class="L o w2">, </i><i class="L n w1">1</i><i class="L o w2">, </i><i class="L n w1">0</i><i class="L o w2">, </i><i class="L n w1">2</i><i class="L w1">)</i><i class="L sc w1">;</i></div>
<div class="num" style="top:337px"><i class="L w3">132</i></div>
<div class="ln" style="top:337px"><i class="L k w12">INSERT INTO </i><i class="L w10">`t_order` </i><i class="L k w7">VALUES </i><i class="L w1">(</i><i class="L n w2">22</i><i class="L o w2">, </i><i class="L n w2">13</i><i class="L o w2">, </i><i class="L n w1">1</i><i class="L o w2">, </i><i class="L s w21">'2025-01-14 08:00:00'</i><i class="L o w2">, </i><i class="L s w21">'2025-01-22 08:00:00'</i><i class="L o w2">, </i><i class="L s w21">'2025-01-03 14:17:06'</i><i class="L o w2">, </i><i class="L n w7">1504.00</i><i class="L o w2">, </i><i class="L n w1">1</i><i class="L o w2">, </i><i class="L n w1">0</i><i class="L o w2">, </i><i class="L n w1">0</i><i class="L w1">)</i><i class="L sc w1">;</i></div>
<div class="num" style="top:359px"><i class="L w3">133</i></div>
<div class="ln" style="top:359px"><i class="L k w12">INSERT INTO </i><i class="L w10">`t_order` </i><i class="L k w7">VALUES </i><i class="L w1">(</i><i class="L n w2">23</i><i class="L o w2">, </i><i class="L n w2">13</i><i class="L o w2">, </i><i class="L n w1">6</i><i class="L o w2">, </i><i class="L s w21">'2025-01-12 08:00:00'</i><i class="L o w2">, </i><i class="L s w21">'2025-01-23 08:00:00'</i><i class="L o w2">, </i><i class="L s w21">'2025-01-12 00:30:41'</i><i class="L o w2">, </i><i class="L n w7">3168.00</i><i class="L o w2">, </i><i class="L n w1">1</i><i class="L o w2">, </i><i class="L n w1">0</i><i class="L o w2">, </i><i class="L n w1">2</i><i class="L w1">)</i><i class="L sc w1">;</i></div>
<div class="num" style="top:381px"><i class="L w3">134</i></div>
<div class="ln" style="top:381px"><i class="L k w12">INSERT INTO </i><i class="L w10">`t_order` </i><i class="L k w7">VALUES </i><i class="L w1">(</i><i class="L n w2">24</i><i class="L o w2">, </i><i class="L n w2">13</i><i class="L o w2">, </i><i class="L n w1">1</i><i class="L o w2">, </i><i class="L s w21">'2025-01-20 08:00:00'</i><i class="L o w2">, </i><i class="L s w21">'2025-01-22 08:00:00'</i><i class="L o w2">, </i><i class="L s w21">'2025-01-20 19:14:53'</i><i class="L o w2">, </i><i class="L n w6">376.00</i><i class="L o w2">, </i><i class="L n w1">1</i><i class="L o w2">, </i><i class="L n w1">0</i><i class="L o w2">, </i><i class="L n w1">0</i><i class="L w1">)</i><i class="L sc w1">;</i></div>
<div class="num" style="top:403px"><i class="L w3">135</i></div>
<div class="num" style="top:425px"><i class="L w3">136</i></div>
<div class="ln" style="top:425px"><i class="L cd w2">--</i><i class="L c w1"> </i><i class="L cd w28">----------------------------</i></div>
<div class="num" style="top:447px"><i class="L w3">137</i></div>
<div class="ln" style="top:447px"><i class="L cd w2">--</i><i class="L c w25"> Table structure for type</i></div>
<div class="num" style="top:469px"><i class="L w3">138</i></div>
<div class="ln" style="top:469px"><i class="L cd w2">--</i><i class="L c w1"> </i><i class="L cd w28">----------------------------</i></div>
<div class="num" style="top:491px"><i class="L w3">139</i></div>
<div class="ln" style="top:491px"><i class="L k w11">DROP TABLE </i><i class="L w3">IF </i><i class="L k w7">EXISTS </i><i class="L w6">`type`</i><i class="L sc w1">;</i></div>
<div class="num" style="top:513px"><i class="L w3">140</i></div>
<div class="ln" style="top:513px"><i class="L k w13">CREATE TABLE </i><i class="L w9">`type`  (</i></div>
<div class="num" style="top:535px"><i class="L w3">141</i></div>
<div class="ln" style="top:535px"><i class="L w2">  </i><i class="L p w5">`id` </i><i class="L k w3">int</i><i class="L w1">(</i><i class="L n w1">0</i><i class="L w2">) </i><i class="L k w9">NOT NULL </i><i class="L w23">AUTO_INCREMENT COMMENT </i><i class="L s w1">'</i><i class="W s">房型</i><i class="L s w3">id'</i><i class="L o w1">,</i></div>
<div class="num" style="top:557px"><i class="L w3">142</i></div>
<div class="ln" style="top:557px"><i class="L w2">  </i><i class="L p w12">`type_name` </i><i class="L k w7">varchar</i><i class="L w1">(</i><i class="L n w3">255</i><i class="L w2">) </i><i class="L k w14">CHARACTER SET </i><i class="L w5">utf8 </i><i class="L k w8">COLLATE </i><i class="L w16">utf8_general_ci </i><i class="L k w9">NOT NULL </i><i class="L w8">COMMENT </i><i class="L s w1">'</i><i class="W s">房型名称</i><i class="L s w1">'</i><i class="L o w1">,</i></div>
<div class="num" style="top:579px"><i class="L w3">143</i></div>
<div class="ln" style="top:579px"><i class="L w2">  </i><i class="L p w8">`price` </i><i class="L k w6">double</i><i class="L w1">(</i><i class="L n w2">10</i><i class="L o w2">, </i><i class="L n w1">2</i><i class="L w2">) </i><i class="L k w9">NOT NULL </i><i class="L w8">COMMENT </i><i class="L s w1">'</i><i class="W s">价格</i><i class="L s w1">'</i><i class="L o w1">,</i></div>
<div class="num" style="top:601px"><i class="L w3">144</i></div>
<div class="ln" style="top:601px"><i class="L w14">  `introduce` </i><i class="L k w7">varchar</i><i class="L w1">(</i><i class="L n w3">255</i><i class="L w2">) </i><i class="L k w14">CHARACTER SET </i><i class="L w5">utf8 </i><i class="L k w8">COLLATE </i><i class="L w16">utf8_general_ci </i><i class="L k w9">NOT NULL </i><i class="L w8">COMMENT </i><i class="L s w1">'</i><i class="W s">简介</i><i class="L s w1">'</i><i class="L o w1">,</i></div>
<div class="num" style="top:623px"><i class="L w3">145</i></div>
<div class="ln" style="top:623px"><i class="L w12">  `feature` </i><i class="L k w7">varchar</i><i class="L w1">(</i><i class="L n w3">255</i><i class="L w2">) </i><i class="L k w14">CHARACTER SET </i><i class="L w5">utf8 </i><i class="L k w8">COLLATE </i><i class="L w16">utf8_general_ci </i><i class="L k w18">NULL DEFAULT NULL </i><i class="L w8">COMMENT </i><i class="L s w1">'</i><i class="W s">特点</i><i class="L s w1">'</i><i class="L o w1">,</i></div>
<div class="num" style="top:645px"><i class="L w3">146</i></div>
<div class="ln" style="top:645px"><i class="L w21">  `cover_image` text </i><i class="L k w14">CHARACTER SET </i><i class="L w5">utf8 </i><i class="L k w8">COLLATE </i><i class="L w16">utf8_general_ci </i><i class="L k w5">NULL </i><i class="L w8">COMMENT </i><i class="L s w1">'</i><i class="W s">封面图</i><i class="L s w1">'</i><i class="L o w1">,</i></div>
<div class="num" style="top:667px"><i class="L w3">147</i></div>
<div class="ln" style="top:667px"><i class="L w20">  `detail_url` text </i><i class="L k w14">CHARACTER SET </i><i class="L w5">utf8 </i><i class="L k w8">COLLATE </i><i class="L w16">utf8_general_ci </i><i class="L k w5">NULL </i><i class="L w8">COMMENT </i><i class="L s w1">'</i><i class="W s">详细链接</i><i class="L s w1">'</i><i class="L o w1">,</i></div>
<div class="num" style="top:689px"><i class="L w3">148</i></div>
<div class="ln" style="top:689px"><i class="L w2">  </i><i class="L k w12">PRIMARY KEY </i><i class="L w7">(`id`) </i><i class="L k w6">USING </i><i class="L w5">BTREE</i></div>
<div class="num" style="top:711px"><i class="L w3">149</i></div>
<div class="ln" style="top:711px"><i class="L w35">) ENGINE = InnoDB AUTO_INCREMENT = </i><i class="L n w2">5 </i><i class="L k w14">CHARACTER SET </i><i class="L w7">= utf8 </i><i class="L k w8">COLLATE </i><i class="L w38">= utf8_general_ci ROW_FORMAT = Dynamic</i><i class="L sc w1">;</i></div>
<div class="num" style="top:733px"><i class="L w3">150</i></div>
<div class="num" style="top:755px"><i class="L w3">151</i></div>
<div class="ln" style="top:755px"><i class="L cd w2">--</i><i class="L c w1"> </i><i class="L cd w28">----------------------------</i></div>
<div class="num" style="top:777px"><i class="L w3">152</i></div>
<div class="ln" style="top:777px"><i class="L cd w2">--</i><i class="L c w16"> Records of type</i></div>
<div class="num" style="top:799px"><i class="L w3">153</i></div>
<div class="ln" style="top:799px"><i class="L cd w2">--</i><i class="L c w1"> </i><i class="L cd w28">----------------------------</i></div>
<div class="num" style="top:821px"><i class="L w3">154</i></div>
<div class="ln" style="top:821px"><i class="L k w12">INSERT INTO </i><i class="L w7">`type` </i><i class="L k w7">VALUES </i><i class="L w1">(</i><i class="L n w1">1</i><i class="L o w2">, </i><i class="L s w1">'</i><i class="W s">单人房</i><i class="L s w1">'</i><i class="L o w2">, </i><i class="L n w6">188.00</i><i class="L o w2">, </i><i class="L s w11">'14m²-15m²'</i><i class="L o w2">, </i><i class="L s w1">'</i><i class="W s">“舒适、简洁”</i><i class="L s w1">'</i><i class="L o w2">, </i><i class="L s w18">'./img/sEXDVe.jpg'</i><i class="L o w2">, </i><i class="L s w2">''</i><i class="L w1">)</i><i class="L sc w1">;</i></div>
<div class="num" style="top:843px"><i class="L w3">155</i></div>
<div class="ln" style="top:843px"><i class="L k w12">INSERT INTO </i><i class="L w7">`type` </i><i class="L k w7">VALUES </i><i class="L w1">(</i><i class="L n w1">2</i><i class="L o w2">, </i><i class="L s w1">'</i><i class="W s">双人房</i><i class="L s w1">'</i><i class="L o w2">, </i><i class="L n w6">288.00</i><i class="L o w2">, </i><i class="L s w11">'20m²-30m²'</i><i class="L o w2">, </i><i class="L s w1">'</i><i class="W s">“舒适、简洁”</i><i class="L s w1">'</i><i class="L o w2">, </i><i class="L s w18">'./img/sEXc8I.jpg'</i><i class="L o w2">, </i><i class="L s w2">''</i><i class="L w1">)</i><i class="L sc w1">;</i></div>
<div class="num" style="top:865px"><i class="L w3">156</i></div>
<div class="ln" style="top:865px"><i class="L k w12">INSERT INTO </i><i class="L w7">`type` </i><i class="L k w7">VALUES </i><i class="L w1">(</i><i class="L n w1">3</i><i class="L o w2">, </i><i class="L s w1">'</i><i class="W s">三人房</i><i class="L s w1">'</i><i class="L o w2">, </i><i class="L n w6">488.00</i><i class="L o w2">, </i><i class="L s w11">'30m²-40m²'</i><i class="L o w2">, </i><i class="L s w1">'</i><i class="W s">“舒适、简洁”</i><i class="L s w1">'</i><i class="L o w2">, </i><i class="L s w18">'./img/sEXWKf.jpg'</i><i class="L o w2">, </i><i class="L s w2">''</i><i class="L w1">)</i><i class="L sc w1">;</i></div>
<div class="num" style="top:887px"><i class="L w3">157</i></div>
<div class="ln" style="top:887px"><i class="L k w12">INSERT INTO </i><i class="L w7">`type` </i><i class="L k w7">VALUES </i><i class="L w1">(</i><i class="L n w1">4</i><i class="L o w2">, </i><i class="L s w1">'</i><i class="W s">大床房</i><i class="L s w1">'</i><i class="L o w2">, </i><i class="L n w6">388.00</i><i class="L o w2">, </i><i class="L s w11">'20m²-30m²'</i><i class="L o w2">, </i><i class="L s w1">'</i><i class="W s">“舒适、简洁”</i><i class="L s w1">'</i><i class="L o w2">, </i><i class="L s w18">'./img/sEXhqS.jpg'</i><i class="L o w2">, </i><i class="L s w2">''</i><i class="L w1">)</i><i class="L sc w1">;</i></div>
<div class="num" style="top:909px"><i class="L w3">158</i></div>
<div class="ln" style="top:909px"><i class="L k w12">INSERT INTO </i><i class="L w7">`type` </i><i class="L k w7">VALUES </i><i class="L w1">(</i><i class="L n w1">5</i><i class="L o w2">, </i><i class="L s w1">'</i><i class="W s">豪华套房</i><i class="L s w1">'</i><i class="L o w2">, </i><i class="L n w6">588.00</i><i class="L o w2">, </i><i class="L s w1">'</i><i class="W s">约</i><i class="L s w5">50m²'</i><i class="L o w2">, </i><i class="L s w1">'</i><i class="W s">“舒适、豪华”</i><i class="L s w1">'</i><i class="L o w2">, </i><i class="L s w18">'./img/sEX7Ps.jpg'</i><i class="L o w2">, </i><i class="L s w2">''</i><i class="L w1">)</i><i class="L sc w1">;</i></div>
<div class="num" style="top:931px"><i class="L w3">159</i></div>
<div class="num" style="top:953px"><i class="L w3">160</i></div>
<div class="ln" style="top:953px"><i class="L cd w2">--</i><i class="L c w1"> </i><i class="L cd w28">----------------------------</i></div>
<div class="num" style="top:975px"><i class="L w3">161</i></div>
<div class="ln" style="top:975px"><i class="L cd w2">--</i><i class="L c w25"> Table structure for user</i></div>
<div class="num" style="top:997px"><i class="L w3">162</i></div>
<div class="ln" style="top:997px"><i class="L cd w2">--</i><i class="L c w1"> </i><i class="L cd w28">----------------------------</i></div>
<div class="num" style="top:1019px"><i class="L w3">163</i></div>
<div class="ln" style="top:1019px"><i class="L k w11">DROP TABLE </i><i class="L w3">IF </i><i class="L k w7">EXISTS </i><i class="L w6">`user`</i><i class="L sc w1">;</i></div>
<div class="num" style="top:1041px"><i class="L w3">164</i></div>
<div class="ln" style="top:1041px"><i class="L k w13">CREATE TABLE </i><i class="L w9">`user`  (</i></div>
<div class="num" style="top:1063px"><i class="L w3">165</i></div>
<div class="ln" style="top:1063px"><i class="L w2">  </i><i class="L p w5">`id` </i><i class="L k w3">int</i><i class="L w1">(</i><i class="L n w1">0</i><i class="L w2">) </i><i class="L k w9">NOT NULL </i><i class="L w23">AUTO_INCREMENT COMMENT </i><i class="L s w1">'</i><i class="W s">用户</i><i class="L s w3">id'</i><i class="L o w1">,</i></div>
<div class="num" style="top:1085px"><i class="L w3">166</i></div>
<div class="ln" style="top:1085px"><i class="L w2">  </i><i class="L p w14">`create_time` </i><i class="L w9">datetime </i><i class="L k w9">NOT NULL </i><i class="L w8">COMMENT </i><i class="L s w1">'</i><i class="W s">用户注册时间</i><i class="L s w1">'</i><i class="L o w1">,</i></div>
<div class="num" style="top:1107px"><i class="L w3">167</i></div>
<div class="ln" style="top:1107px"><i class="L w2">  </i><i class="L p w8">`email` </i><i class="L k w7">varchar</i><i class="L w1">(</i><i class="L n w3">255</i><i class="L w2">) </i><i class="L k w14">CHARACTER SET </i><i class="L w5">utf8 </i><i class="L k w8">COLLATE </i><i class="L w16">utf8_general_ci </i><i class="L k w9">NOT NULL </i><i class="L w8">COMMENT </i><i class="L s w1">'</i><i class="W s">用户邮箱</i><i class="L s w1">'</i><i class="L o w1">,</i></div>
<div class="num" style="top:1129px"><i class="L w3">168</i></div>
<div class="ln" style="top:1129px"><i class="L w2">  </i><i class="L p w12">`user_name` </i><i class="L k w7">varchar</i><i class="L w1">(</i><i class="L n w3">255</i><i class="L w2">) </i><i class="L k w14">CHARACTER SET </i><i class="L w5">utf8 </i><i class="L k w8">COLLATE </i><i class="L w16">utf8_general_ci </i><i class="L k w9">NOT NULL </i><i class="L w8">COMMENT </i><i class="L s w1">'</i><i class="W s">用户名</i><i class="L s w1">'</i><i class="L o w1">,</i></div>
<div class="num" style="top:1151px"><i class="L w3">169</i></div>
<div class="ln" style="top:1151px"><i class="L w2">  </i><i class="L p w11">`password` </i><i class="L k w7">varchar</i><i class="L w1">(</i><i class="L n w3">255</i><i class="L w2">) </i><i class="L k w14">CHARACTER SET </i><i class="L w5">utf8 </i><i class="L k w8">COLLATE </i><i class="L w16">utf8_general_ci </i><i class="L k w9">NOT NULL </i><i class="L w8">COMMENT </i><i class="L s w1">'</i><i class="W s">密码</i><i class="L s w1">'</i><i class="L o w1">,</i></div>
<div class="num" style="top:1173px"><i class="L w3">170</i></div>
<div class="ln" style="top:1173px"><i class="L w2">  </i><i class="L p w6">`sex` </i><i class="L k w3">int</i><i class="L w1">(</i><i class="L n w1">0</i><i class="L w2">) </i><i class="L k w9">NOT NULL </i><i class="L w8">COMMENT </i><i class="L s w1">'</i><i class="W s">性别</i><i class="L s w3">  0</i><i class="W s">：女</i><i class="L s w3">  1</i><i class="W s">：男</i><i class="L s w1">'</i><i class="L o w1">,</i></div>
<div class="num" style="top:1195px"><i class="L w3">171</i></div>
<div class="ln" style="top:1195px"><i class="L w2">  </i><i class="L p w8">`phone` </i><i class="L k w7">varchar</i><i class="L w1">(</i><i class="L n w3">255</i><i class="L w2">) </i><i class="L k w14">CHARACTER SET </i><i class="L w5">utf8 </i><i class="L k w8">COLLATE </i><i class="L w16">utf8_general_ci </i><i class="L k w18">NULL DEFAULT NULL </i><i class="L w8">COMMENT </i><i class="L s w1">'</i><i class="W s">电话</i><i class="L s w1">'</i><i class="L o w1">,</i></div>
<div class="num" style="top:1217px"><i class="L w3">172</i></div>
<div class="ln" style="top:1217px"><i class="L w2">  </i><i class="L p w1">`</i><i class="L p wv w5">jifen</i><i class="L p w2">` </i><i class="L k w3">int</i><i class="L w1">(</i><i class="L n w1">0</i><i class="L w2">) </i><i class="L k w9">NOT NULL </i><i class="L w8">COMMENT </i><i class="L s w1">'</i><i class="W s">积分</i><i class="L s w1">'</i><i class="L o w1">,</i></div>
<div class="num" style="top:1239px"><i class="L w3">173</i></div>
<div class="ln" style="top:1239px"><i class="L w2">  </i><i class="L p w8">`state` </i><i class="L k w3">int</i><i class="L w1">(</i><i class="L n w1">0</i><i class="L w2">) </i><i class="L k w9">NOT NULL </i><i class="L w8">COMMENT </i><i class="L s w1">'</i><i class="W s">状态：</i><i class="L s w1">0</i><i class="W s">：在该店没有消费过</i><i class="L s w3">  1</i><i class="W s">：在该店消费过</i><i class="L s w5">\r\n'</i><i class="L o w1">,</i></div>
<div class="num" style="top:1261px"><i class="L w3">174</i></div>
<div class="ln" style="top:1261px"><i class="L w2">  </i><i class="L k w12">PRIMARY KEY </i><i class="L w1">(</i><i class="L p w4">`id`</i><i class="L o w2">, </i><i class="L p w7">`email`</i><i class="L w2">) </i><i class="L k w6">USING </i><i class="L w5">BTREE</i><i class="L o w1">,</i></div>
</div></body></html>
